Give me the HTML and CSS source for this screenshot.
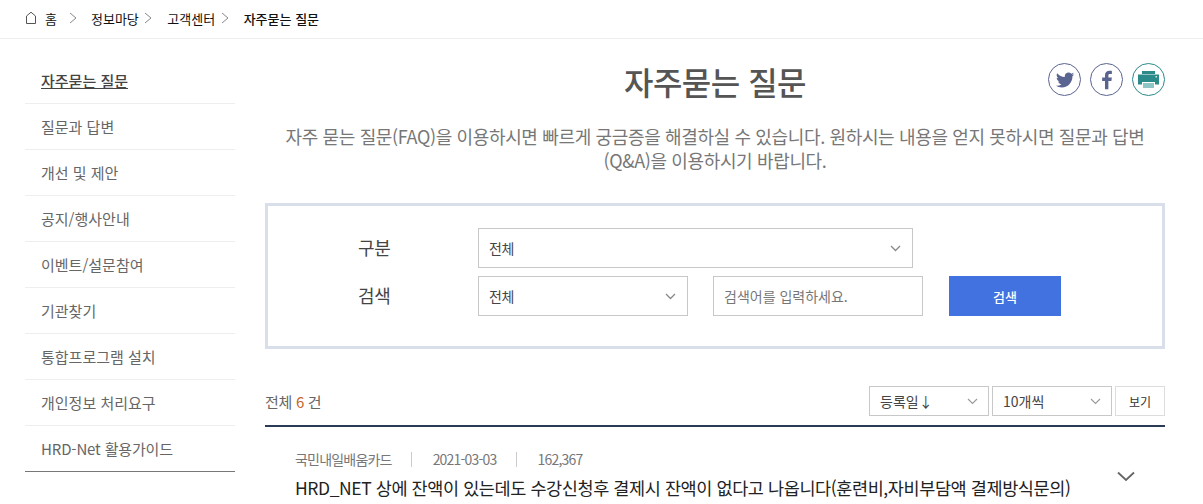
FILE: index.html
```html
<!DOCTYPE html>
<html lang="ko">
<head>
<meta charset="utf-8">
<title>자주묻는 질문</title>
<link rel="stylesheet" href="styles.css">
</head>
<body>
<nav class="crumbs">
  <svg class="home-icon" width="12" height="14" viewBox="0 0 12 14"><path d="M1.500 12.500V5L6 1.200 10.500 5v7.500z" fill="none" stroke="#555" stroke-width="1"/></svg>
  <a class="crumb crumb-home">홈</a>
  <svg class="chev chev-home" width="9" height="12" viewBox="0 0 9 12"><path d="M1 1l6 5-6 5" fill="none" stroke="#888" stroke-width="1"/></svg>
  <a class="crumb">정보마당</a>
  <svg class="chev" width="9" height="12" viewBox="0 0 9 12"><path d="M1 1l6 5-6 5" fill="none" stroke="#888" stroke-width="1"/></svg>
  <a class="crumb">고객센터</a>
  <svg class="chev" width="9" height="12" viewBox="0 0 9 12"><path d="M1 1l6 5-6 5" fill="none" stroke="#888" stroke-width="1"/></svg>
  <strong class="crumb crumb-now">자주묻는 질문</strong>
</nav>
<div class="layout">
  <aside class="side">
    <ul class="side-list">
      <li class="side-item is-active"><a>자주묻는 질문</a></li>
      <li class="side-item"><a>질문과 답변</a></li>
      <li class="side-item"><a>개선 및 제안</a></li>
      <li class="side-item"><a>공지/행사안내</a></li>
      <li class="side-item"><a>이벤트/설문참여</a></li>
      <li class="side-item"><a>기관찾기</a></li>
      <li class="side-item"><a>통합프로그램 설치</a></li>
      <li class="side-item"><a>개인정보 처리요구</a></li>
      <li class="side-item"><a>HRD-Net 활용가이드</a></li>
    </ul>
  </aside>
  <main class="main">
    <div class="title-row">
      <h1 class="title">자주묻는 질문</h1>
      <div class="socials">
        <span class="social">
          <svg width="20" height="20" viewBox="0 0 24 24"><path fill="#5a6491" d="M23 5.100c-.8.400-1.700.600-2.600.700.900-.600 1.600-1.400 2-2.500-.9.500-1.800.900-2.900 1.100a4.500 4.500 0 0 0-7.800 3.100c0 .400 0 .700.100 1C8.100 8.300 4.800 6.500 2.600 3.800c-.4.700-.6 1.400-.6 2.300 0 1.600.8 3 2 3.800-.7 0-1.400-.2-2-.6v.100c0 2.200 1.600 4 3.600 4.400-.4.100-.8.200-1.200.2-.3 0-.6 0-.8-.1.600 1.800 2.200 3.100 4.200 3.100A9.100 9.100 0 0 1 1 18.900 12.800 12.800 0 0 0 8 21c8.300 0 12.900-6.900 12.900-12.900v-.6c.9-.6 1.600-1.400 2.100-2.400z"/></svg>
        </span>
        <span class="social">
          <svg width="22" height="22" viewBox="0 0 24 24"><path fill="#5a6491" d="M13.500 22v-9h3.300l.5-3.700h-3.800V7.300c0-1.100.3-1.800 1.800-1.800h2V2.200C16.900 2.100 15.800 2 14.600 2c-2.800 0-4.800 1.700-4.800 4.900v2.400H6.700V13h3.100v9z"/></svg>
        </span>
        <span class="social social-print">
          <svg width="21" height="17" viewBox="0 0 21 17"><path fill="#2b8a8a" d="M4 0h13v3H4z"/><path fill="#2b8a8a" d="M0 3.500h21v10h-4V11H4v2.500H0z"/><path fill="#8fc5c5" d="M5 12h11v5H5z"/><path fill="#d5ecec" d="M17.500 5h1.500v1.500h-1.500z"/></svg>
        </span>
      </div>
    </div>
    <p class="intro">자주 묻는 질문(FAQ)을 이용하시면 빠르게 궁금증을 해결하실 수 있습니다. 원하시는 내용을 얻지 못하시면 질문과 답변(Q&amp;A)을 이용하시기 바랍니다.</p>
    <form class="search">
      <div class="search-row">
        <label class="search-label">구분</label>
        <div class="select select-wide"><span>전체</span><svg class="caret" width="11" height="7" viewBox="0 0 11 7"><path d="M1 1l4.500 4.500L10 1" fill="none" stroke="#888" stroke-width="1.300"/></svg></div>
      </div>
      <div class="search-row">
        <label class="search-label">검색</label>
        <div class="select select-mid"><span>전체</span><svg class="caret" width="11" height="7" viewBox="0 0 11 7"><path d="M1 1l4.500 4.500L10 1" fill="none" stroke="#888" stroke-width="1.300"/></svg></div>
        <div class="field">검색어를 입력하세요.</div>
        <button class="search-btn" type="button">검색</button>
      </div>
    </form>
    <div class="list-bar">
      <div class="total">전체 <em class="total-num">6</em> 건</div>
      <div class="list-tools">
        <div class="select select-small"><span>등록일↓</span><svg class="caret" width="11" height="7" viewBox="0 0 11 7"><path d="M1 1l4.500 4.500L10 1" fill="none" stroke="#999" stroke-width="1.100"/></svg></div>
        <div class="select select-small"><span>10개씩</span><svg class="caret" width="11" height="7" viewBox="0 0 11 7"><path d="M1 1l4.500 4.500L10 1" fill="none" stroke="#999" stroke-width="1.100"/></svg></div>
        <button class="view-btn" type="button">보기</button>
      </div>
    </div>
    <article class="faq">
      <div class="faq-body">
        <div class="faq-meta"><span>국민내일배움카드</span><span>2021-03-03</span><span>162,367</span></div>
        <h2 class="faq-title">HRD_NET 상에 잔액이 있는데도 수강신청후 결제시 잔액이 없다고 나옵니다(훈련비,자비부담액 결제방식문의)</h2>
      </div>
      <svg class="faq-caret" width="18" height="11" viewBox="0 0 18 11"><path d="M1 1.500l8 7.500 8-7.500" fill="none" stroke="#666" stroke-width="1.800"/></svg>
    </article>
  </main>
</div>
</body>
</html>
```

FILE: styles.css
```css
* { box-sizing: border-box; }
html, body { margin: 0; padding: 0; height: 504px; overflow: hidden; background: #fff; }
body { font-family: "Noto Sans CJK KR", "Noto Sans", sans-serif; color: #333; }
ul { list-style: none; margin: 0; padding: 0; }

.crumbs { height: 39px; border-bottom: 1px solid #eee; display: flex; align-items: center; padding: 0 0 2px 25px; font-size: 13px; color: #111; }
.home-icon { margin-right: 8px; }
.crumb-home { margin-right: 12px; }
.chev { margin: 0 14px 0 5.5px; }
.chev-home { margin: 0 13px 0 0; }
.crumb-now { font-weight: 500; color: #111; }

.layout { display: flex; padding-left: 25px; padding-top: 19px; }
.side { width: 210px; flex: none; }
.side-list { border-bottom: 1px solid #777; }
.side-item { height: 46px; padding-left: 16px; line-height: 45px; font-size: 15px; color: #666; border-bottom: 1px solid #eee; }
.side-item:last-child { height: 45px; border-bottom: 0; letter-spacing: -0.15px; }
.is-active { color: #444; font-weight: 500; }
.is-active a { text-decoration: underline; }

.main { width: 900px; margin-left: 30px; flex: none; }
.title-row { position: relative; height: 50px; text-align: center; }
.title { margin: -2px 0 0; font-size: 32px; font-weight: 500; line-height: 50px; letter-spacing: -0.5px; color: #555; }
.socials { position: absolute; right: 0; top: 7px; display: flex; gap: 9px; }
.social { width: 33px; height: 33px; border: 1px solid #5a6491; border-radius: 50%; display: flex; align-items: center; justify-content: center; }
.social-print { border-color: #2b8a8a; }
.intro { margin: 18px 0 0; font-size: 18px; line-height: 24px; letter-spacing: -0.36px; text-align: center; color: #777; padding: 0 10px; }

.search { margin-top: 31px; height: 146px; border: 3px solid #d9dfea; padding: 22px 0 0 89px; display: flex; flex-direction: column; gap: 8px; }
.search-row { display: flex; align-items: center; }
.search-label { width: 121px; padding: 0 0 3px 1px; font-size: 18px; letter-spacing: -0.3px; color: #444; }
.select { height: 40px; border: 1px solid #c8c8c8; display: flex; align-items: center; justify-content: space-between; padding: 0 11px 0 10px; font-size: 14px; letter-spacing: -0.5px; color: #444; background: #fff; }
.select span { padding-bottom: 1px; }
.select-wide { width: 435px; }
.select-mid { width: 210px; }
.field { width: 210px; height: 40px; margin-left: 25px; border: 1px solid #c8c8c8; padding-left: 10px; line-height: 38px; font-size: 14px; color: #777; }
.search-btn { width: 112px; height: 40px; margin-left: 26px; border: 0; background: #4272e0; color: #fff; font: 500 13px "Noto Sans CJK KR", sans-serif; }

.list-bar { margin-top: 38px; height: 40px; padding-bottom: 10px; border-bottom: 2px solid #2b3a55; display: flex; justify-content: space-between; align-items: center; }
.total { font-size: 15px; letter-spacing: -0.3px; color: #666; }
.total-num { font-style: normal; color: #c8642a; }
.list-tools { display: flex; gap: 3px; }
.select-small { width: 120px; height: 30px; padding-right: 10px; font-size: 14px; letter-spacing: 0; }
.view-btn { width: 50px; height: 30px; border: 1px solid #ddd; background: #fff; color: #333; font: 12px "Noto Sans CJK KR", sans-serif; padding: 0; }

.faq { display: flex; justify-content: space-between; padding: 20px 30px 0 30px; }
.faq-meta { display: flex; font-size: 14px; letter-spacing: -0.8px; color: #777; line-height: 24px; }
.faq-meta span + span { margin-left: 19px; padding-left: 22px; background: linear-gradient(#ccc, #ccc) left center / 1px 15px no-repeat; }
.faq-title { margin: 4px 0 0; font-size: 17.5px; font-weight: 400; line-height: 26px; letter-spacing: -0.41px; color: #222; white-space: nowrap; }
.faq-caret { margin-top: 24px; flex: none; }
```
